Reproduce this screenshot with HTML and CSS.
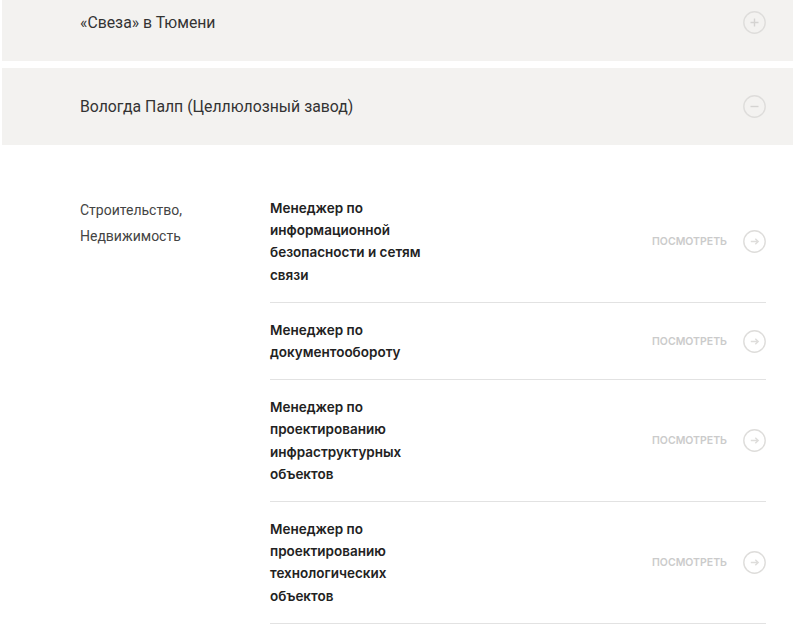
FILE: index.html
```html
<!DOCTYPE html>
<html lang="ru">
  <head>
    <meta charset="UTF-8">
    <meta name="viewport" content="width=device-width, initial-scale=1.0">
    <title>Вакансии</title>
    <link rel="stylesheet" href="styles.css">
  </head>
  <body>
    <div class="companies">
      <div class="company">
        <div class="company-header">
          <span class="company-name">«Свеза» в Тюмени</span>
          <span class="toggle">
            <svg width="23" height="23" viewBox="0 0 23 23"><circle cx="11.5" cy="11.5" r="10.7"/><path d="M11.5 7.5v8M7.5 11.5h8"/></svg>
          </span>
        </div>
      </div>

      <div class="company open">
        <div class="company-header">
          <span class="company-name">Вологда Палп (Целлюлозный завод)</span>
          <span class="toggle">
            <svg width="23" height="23" viewBox="0 0 23 23"><circle cx="11.5" cy="11.5" r="10.7"/><path d="M7.5 11.5h8"/></svg>
          </span>
        </div>

        <div class="company-body">
          <div class="category">Строительство,<br>Недвижимость</div>
          <div class="vacancies">
            <div class="vacancy">
              <div class="vacancy-title">Менеджер по информационной безопасности и сетям связи</div>
              <a class="vacancy-link" href="#">Посмотреть <span class="arrow"><svg width="23" height="23" viewBox="0 0 23 23"><circle cx="11.5" cy="11.5" r="10.7"/><path d="M7.8 11.5h7.4M12.3 8.7l2.9 2.8-2.9 2.8"/></svg></span></a>
            </div>
            <div class="vacancy">
              <div class="vacancy-title">Менеджер по документообороту</div>
              <a class="vacancy-link" href="#">Посмотреть <span class="arrow"><svg width="23" height="23" viewBox="0 0 23 23"><circle cx="11.5" cy="11.5" r="10.7"/><path d="M7.8 11.5h7.4M12.3 8.7l2.9 2.8-2.9 2.8"/></svg></span></a>
            </div>
            <div class="vacancy">
              <div class="vacancy-title">Менеджер по проектированию инфраструктурных объектов</div>
              <a class="vacancy-link" href="#">Посмотреть <span class="arrow"><svg width="23" height="23" viewBox="0 0 23 23"><circle cx="11.5" cy="11.5" r="10.7"/><path d="M7.8 11.5h7.4M12.3 8.7l2.9 2.8-2.9 2.8"/></svg></span></a>
            </div>
            <div class="vacancy">
              <div class="vacancy-title">Менеджер по проектированию технологических объектов</div>
              <a class="vacancy-link" href="#">Посмотреть <span class="arrow"><svg width="23" height="23" viewBox="0 0 23 23"><circle cx="11.5" cy="11.5" r="10.7"/><path d="M7.8 11.5h7.4M12.3 8.7l2.9 2.8-2.9 2.8"/></svg></span></a>
            </div>
          </div>
        </div>
      </div>
    </div>
  </body>
</html>
```

FILE: styles.css
```css
* {
    margin: 0;
    padding: 0;
    box-sizing: border-box;
}

body {
    font-family: Roboto, 'Noto Sans', sans-serif;
    background: #fff;
    color: #333;
    overflow: hidden;
}

.companies {
    width: 791px;
    margin: -16px 0 0 2px;
}

.company + .company {
    margin-top: 7px;
}

.company-header {
    height: 77px;
    background: #f3f2f0;
    display: flex;
    align-items: center;
    justify-content: space-between;
    padding: 0 27px 0 78px;
}

.company-name {
    font-size: 15.8px;
    color: #333;
}

.toggle svg,
.arrow svg {
    display: block;
    fill: none;
    stroke: #dedddb;
    stroke-width: 1.4;
}

.toggle svg path {
    stroke: #d4d3d1;
}

.company-body {
    display: flex;
    padding: 52px 27px 0 78px;
}

.category {
    width: 190px;
    font-size: 14px;
    line-height: 26px;
    color: #444;
}

.vacancies {
    flex: 1;
}

.vacancy {
    display: flex;
    align-items: center;
    justify-content: space-between;
    padding: 16px 0;
    border-bottom: 1px solid #e2e2e2;
}

.vacancy:first-child {
    padding-top: 0;
}

.vacancy-title {
    width: 180px;
    font-family: Inter, sans-serif;
    font-weight: 600;
    font-size: 13.5px;
    line-height: 22.2px;
    color: #222;
}

.vacancy-link {
    display: flex;
    align-items: center;
    gap: 16px;
    font-family: Inter, sans-serif;
    font-size: 10.5px;
    font-weight: 600;
    text-transform: uppercase;
    text-decoration: none;
    color: #cbcbcb;
}
```
